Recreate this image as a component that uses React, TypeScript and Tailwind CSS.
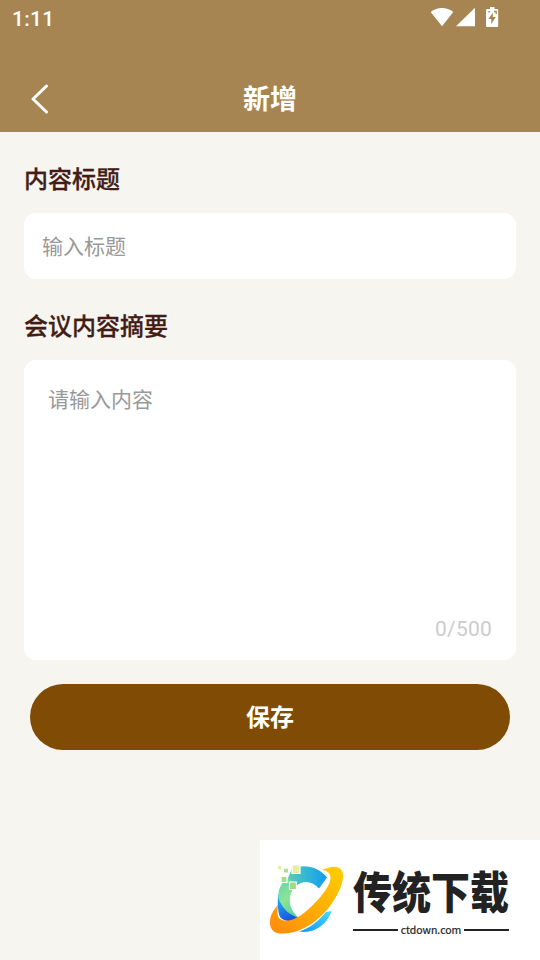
import { useState } from 'react';

const MAX_LENGTH = 500;

function StatusBar() {
  return (
    <div className="flex h-9 items-center justify-between pl-3 pr-10">
      <span className="pt-0.5 font-[Roboto] text-[21px] font-medium leading-9 tracking-[0.3px]">1:11</span>
      <div className="flex items-center pb-0.5">
        <svg width="24" height="20" viewBox="0 0 24 20" fill="currentColor">
          <path d="M12 19.2 0.7 5.1C4 2.4 8 1 12 1s8 1.4 11.3 4.1z" />
        </svg>
        <svg className="ml-0.5" width="20" height="20" viewBox="0 0 20 20" fill="currentColor">
          <path d="M0 19.2 19 0.8v18.4z" />
        </svg>
        <svg className="ml-2.5" width="14" height="20" viewBox="0 0 14 20">
          <path fill="currentColor" d="M4 0h4.500v2H11q1.200 0 1.200 1.200v15.600Q12.200 20 11 20H1.200Q0 20 0 18.800V3.200Q0 2 1.200 2H4z" />
          <path fill="#a68552" d="M6.800 5.500 2.500 12h2.800v5L9.800 10H6.800z" />
          <path stroke="#a68552" strokeWidth="1.300" d="M2.300 5.200 4 4.500M8 4.500h2.200V7" fill="none" />
        </svg>
      </div>
    </div>
  );
}

function Logo() {
  return (
    <svg width="95" height="95" viewBox="0 0 95 95">
      <defs>
        <linearGradient id="top" x1="0" y1="0" x2="1" y2="0">
          <stop offset="0" stopColor="#55cfb8" />
          <stop offset="1" stopColor="#109cf0" />
        </linearGradient>
        <linearGradient id="left" x1="0" y1="0" x2="0.4" y2="1">
          <stop offset="0" stopColor="#55cdb0" />
          <stop offset="0.6" stopColor="#8ce596" />
          <stop offset="1" stopColor="#60d4a0" />
        </linearGradient>
        <linearGradient id="blue" x1="0" y1="0" x2="0.5" y2="1">
          <stop offset="0" stopColor="#20b8ff" />
          <stop offset="1" stopColor="#1a54e0" />
        </linearGradient>
        <linearGradient id="tail" x1="0" y1="1" x2="1" y2="0">
          <stop offset="0" stopColor="#1593f5" />
          <stop offset="1" stopColor="#45dcff" />
        </linearGradient>
        <linearGradient id="ring" x1="1" y1="0" x2="0" y2="1">
          <stop offset="0" stopColor="#ffcf00" />
          <stop offset="1" stopColor="#ff8a0c" />
        </linearGradient>
      </defs>
      <path fill="url(#blue)" d="M18.300 44C17 53 18 62 20 67C24 72 33 72 39 68C30 64 23 56 18.300 44z" />
      <path fill="url(#left)" d="M24 31C18 38 17 46 20 52C24 60 30 65 39 68C32 62 29 55 30 48C31 41 34 37 40 33.500L34 24z" />
      <path fill="url(#top)" d="M32 18.500C44 14 58 16 67 27.500L59 38.500C53 31 44 30 37 35L28 28z" />
      <path fill="url(#tail)" d="M71.500 61C67 75 54 84 39 81.500C51 78 59 70 66 62z" />
      <path fill="url(#ring)" d="M62 20C70 16.500 78 15 81.500 20C86 27 81 42 67 60C51 78 34 84.500 20 83.500C12 83 9 77 10.200 69C11 64 14 59 18 55C17.500 60 16.500 66 20 69C27 73.500 38 68 44.500 62.500C55 54 65 43 69.500 33C72 26 70 21 62 20z" />
      <g stroke="#fff" strokeWidth="1.200">
        <path fill="#e6eea0" d="M32 15h8v8.500h-8z" />
        <path fill="#9bdc85" d="M29.500 32h7v7.500h-7z" />
        <path fill="#a5de86" d="M21 26.500h6v6h-6z" />
        <path fill="#a8df88" d="M23.500 18.200h5v5h-5z" />
        <path fill="#e4efa5" d="M17.300 15.300h4.400v4.800h-4.400z" />
      </g>
    </svg>
  );
}

function Watermark() {
  return (
    <div className="absolute bottom-0 right-0 flex h-[120px] w-[280px] bg-white pt-2.5">
      <Logo />
      <div className="-ml-0.5 w-[156px] pt-[14px]">
        <div className="h-[54px] origin-top scale-y-[1.15] whitespace-nowrap text-[39px] font-black leading-[44px] text-[#222]">
          传统下载
        </div>
        <div className="flex h-6 items-center gap-[3px]">
          <span className="h-0.5 flex-1 bg-[#222]" />
          <span className="text-[10.500px] font-normal leading-4 text-[#222] [-webkit-text-stroke:0.2px_#222]">ctdown.com</span>
          <span className="h-0.5 flex-1 bg-[#222]" />
        </div>
      </div>
    </div>
  );
}

export default function App() {
  const [title, setTitle] = useState('');
  const [content, setContent] = useState('');

  return (
    <div className="relative h-[960px] w-[540px] overflow-hidden bg-[#f6f5f0] font-['Noto_Sans_CJK_SC',sans-serif]">
      <header className="h-[132px] bg-[#a68552] text-white">
        <StatusBar />
        <div className="mt-[30px] grid h-[66px] grid-cols-[80px_1fr_80px] items-center">
          <button className="pl-[30px]" aria-label="返回">
            <svg width="20" height="32" viewBox="0 0 20 32" fill="none" stroke="currentColor" strokeWidth="3" strokeLinecap="round" strokeLinejoin="round">
              <path d="M16.500 3 3 16l13.500 13" />
            </svg>
          </button>
          <h1 className="pb-0.5 text-center text-[27px] font-bold leading-10">新增</h1>
        </div>
      </header>

      <main className="px-6 pt-6">
        <label className="block h-[57px] text-2xl font-medium leading-[44px] text-[#431c16] [-webkit-text-stroke:0.3px_#431c16]" htmlFor="title">
          内容标题
        </label>
        <input
          id="title"
          className="block h-[66px] w-full rounded-xl bg-white px-[18px] pb-0.5 text-[21px] text-[#333] outline-none placeholder:text-[#999]"
          placeholder="输入标题"
          value={title}
          onChange={(e) => setTitle(e.target.value)}
        />

        <label className="mt-6 block h-[57px] text-2xl font-medium leading-[44px] text-[#431c16] [-webkit-text-stroke:0.3px_#431c16]" htmlFor="content">
          会议内容摘要
        </label>
        <div className="flex h-[300px] flex-col rounded-xl bg-white px-6 pb-4 pt-6">
          <textarea
            id="content"
            className="block w-full flex-1 resize-none text-[21px] leading-[28px] text-[#333] outline-none placeholder:text-[#999]"
            placeholder="请输入内容"
            maxLength={MAX_LENGTH}
            value={content}
            onChange={(e) => setContent(e.target.value)}
          />
          <div className="text-right font-[Roboto] text-[21px] leading-[30px] tracking-[0.2px] text-[#ccc]">
            {content.length}/{MAX_LENGTH}
          </div>
        </div>

        <button className="mx-auto mt-6 block h-[66px] w-[480px] rounded-full bg-[#804c05] pb-0.5 text-2xl font-bold text-white">
          保存
        </button>
      </main>

      <Watermark />
    </div>
  );
}
